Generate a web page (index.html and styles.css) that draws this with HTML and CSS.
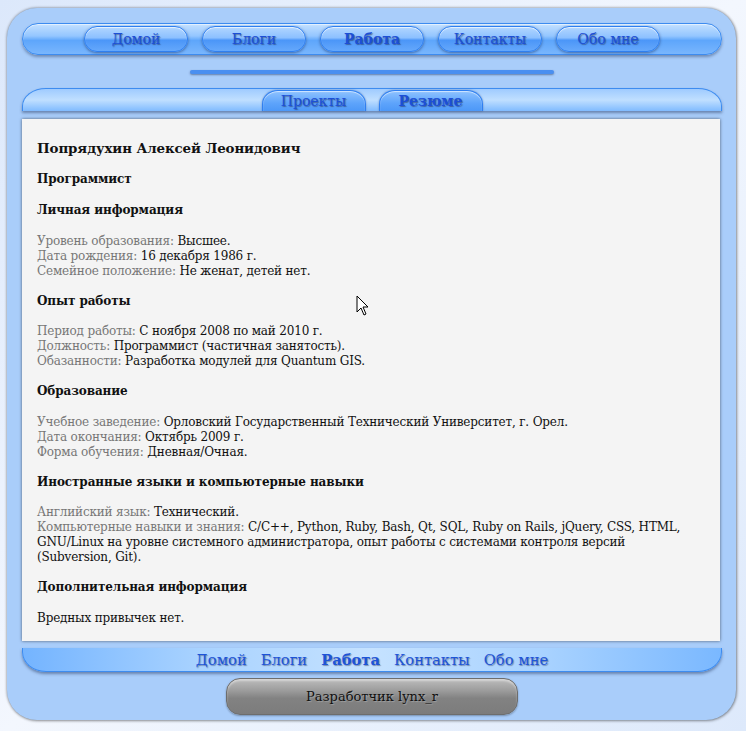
FILE: index.html
```html
<!DOCTYPE html>
<html lang="ru">
<head>
<meta charset="utf-8">
<title>Резюме</title>
<link rel="stylesheet" href="styles.css">
</head>
<body>
<div class="wrap">
  <nav class="topbar">
    <a class="btn">Домой</a>
    <a class="btn">Блоги</a>
    <a class="btn active">Работа</a>
    <a class="btn">Контакты</a>
    <a class="btn">Обо мне</a>
  </nav>
  <div class="sep"></div>
  <nav class="subbar">
    <a class="tab">Проекты</a>
    <a class="tab active">Резюме</a>
  </nav>
  <main class="content">
    <h1 class="name">Попрядухин Алексей Леонидович</h1>
    <h3 class="sec">Программист</h3>
    <h3 class="sec">Личная информация</h3>
    <p class="info"><span class="lbl">Уровень образования:</span> Высшее.<br><span class="lbl">Дата рождения:</span> 16 декабря 1986 г.<br><span class="lbl">Семейное положение:</span> Не женат, детей нет.</p>
    <h3 class="sec">Опыт работы</h3>
    <p class="info"><span class="lbl">Период работы:</span> С ноября 2008 по май 2010 г.<br><span class="lbl">Должность:</span> Программист (частичная занятость).<br><span class="lbl">Обазанности:</span> Разработка модулей для Quantum GIS.</p>
    <h3 class="sec">Образование</h3>
    <p class="info"><span class="lbl">Учебное заведение:</span> Орловский Государственный Технический Университет, г. Орел.<br><span class="lbl">Дата окончания:</span> Октябрь 2009 г.<br><span class="lbl">Форма обучения:</span> Дневная/Очная.</p>
    <h3 class="sec">Иностранные языки и компьютерные навыки</h3>
    <p class="info"><span class="lbl">Английский язык:</span> Технический.<br><span class="lbl">Компьютерные навыки и знания:</span> C/C++, Python, Ruby, Bash, Qt, SQL, Ruby on Rails, jQuery, CSS, HTML, GNU/Linux на уровне системного администратора, опыт работы с системами контроля версий (Subversion, Git).</p>
    <h3 class="sec">Дополнительная информация</h3>
    <p class="info">Вредных привычек нет.</p>
    <svg class="cursor" width="14" height="22" viewBox="0 0 14 22"><path d="M1 1 L1 17 L5 13 L8 20 L10 19 L7 12 L12 12 Z" fill="#fff" stroke="#000" stroke-width="1"/></svg>
  </main>
  <nav class="footbar">
    <a class="flink">Домой</a>
    <a class="flink">Блоги</a>
    <a class="flink active">Работа</a>
    <a class="flink">Контакты</a>
    <a class="flink">Обо мне</a>
  </nav>
  <div class="credit">Разработчик lynx_r</div>
</div>
</body>
</html>
```
FILE: styles.css
```css
html, body {
  margin: 0;
  padding: 0;
}
body {
  background: linear-gradient(135deg, #dce8fb 0%, #f3f7fe 50%, #dde9fb 100%);
  font-family: "DejaVu Serif", "Liberation Serif", serif;
  min-height: 731px;
  overflow: hidden;
}
.wrap {
  position: relative;
  margin: 8px 10px 0 7px;
  height: 712px;
  box-sizing: border-box;
  padding: 15px 14px 0 15px;
  background: #a9cdfa;
  border-radius: 30px;
  box-shadow: 0 0 3px rgba(0,0,0,0.45), 1px 1px 3px rgba(0,0,0,0.25);
  display: flex;
  flex-direction: column;
  align-items: stretch;
}
.topbar {
  height: 32px;
  box-sizing: border-box;
  border: 1px solid #3d8cf0;
  border-radius: 16px;
  background: linear-gradient(#c3e0ff 0%, #94c6ff 40%, #5ea6fb 55%, #79b6fd 100%);
  box-shadow: 0 2px 3px rgba(40,60,100,0.45), inset 0 1px 1px rgba(255,255,255,0.6);
  display: flex;
  justify-content: center;
  align-items: center;
  gap: 14px;
}
.btn {
  width: 104px;
  height: 26px;
  box-sizing: border-box;
  border: 1px solid #2f7ff0;
  border-radius: 13px;
  background: linear-gradient(#b2d6ff 0%, #8cc0ff 45%, #4b96f8 55%, #65a8fb 100%);
  box-shadow: 0 1px 3px rgba(20,40,90,0.55), inset 0 1px 1px rgba(255,255,255,0.7);
  display: flex;
  align-items: center;
  justify-content: center;
  font-family: "DejaVu Serif", serif;
  font-size: 14px;
  color: #1c4fd6;
  text-shadow: 1px 1px 1px rgba(30,40,80,0.5);
  cursor: pointer;
}
.btn.active {
  font-weight: bold;
}
.sep {
  align-self: center;
  width: 364px;
  height: 4px;
  margin: 15px 0 14px;
  border-radius: 2px;
  background: #4a8ff0;
  box-shadow: 0 1px 2px rgba(30,50,90,0.5);
}
.subbar {
  height: 23px;
  box-sizing: border-box;
  border: 1px solid #3d8cf0;
  border-bottom: 0;
  border-radius: 24px 24px 0 0 / 18px 18px 0 0;
  background: linear-gradient(#9fcbff 0%, #c0dfff 50%, #80bbff 100%);
  box-shadow: 0 2px 3px rgba(40,60,100,0.5);
  display: flex;
  justify-content: center;
  align-items: flex-end;
  gap: 13px;
}
.tab {
  width: 104px;
  height: 21px;
  box-sizing: border-box;
  border: 1px solid #2f7ff0;
  border-bottom: 0;
  border-radius: 16px 16px 0 0 / 14px 14px 0 0;
  background: linear-gradient(#8ec2ff 0%, #5ea4fb 60%, #4c98f8 100%);
  box-shadow: 0 0 2px rgba(20,40,90,0.45), inset 0 1px 1px rgba(255,255,255,0.6);
  display: flex;
  align-items: center;
  justify-content: center;
  font-size: 14px;
  color: #1c4fd6;
  text-shadow: 1px 1px 1px rgba(30,40,80,0.5);
}
.tab.active {
  font-weight: bold;
}
.content {
  position: relative;
  margin-top: 8px;
  margin-right: 2px;
  height: 522px;
  box-sizing: border-box;
  padding: 20px 26px 0 15px;
  background: #f4f4f4;
  box-shadow: 0 0 3px rgba(0,0,0,0.55);
  font-family: "DejaVu Serif", serif;
  font-size: 12px;
  line-height: 15px;
  letter-spacing: -0.18px;
  color: #111;
}
.name {
  margin: 0;
  font-size: 13.4px;
  line-height: 18px;
  font-weight: bold;
  letter-spacing: -0.1px;
}
.sec {
  margin: 13px 0 0;
  font-size: 12px;
  line-height: 18px;
  font-weight: bold;
  letter-spacing: -0.1px;
}
.info {
  margin: 14.6px 0 0;
}
.lbl {
  color: #777;
}
.cursor {
  position: absolute;
  left: 334px;
  top: 176px;
}
.footbar {
  margin-top: 7px;
  height: 24px;
  box-sizing: border-box;
  border: 1px solid #3d8cf0;
  border-top: 0;
  border-radius: 0 0 24px 24px / 0 0 20px 20px;
  background: linear-gradient(90deg, #74b4ff 0%, #a8d2ff 25%, #c5e2ff 50%, #a8d2ff 75%, #7ab8ff 100%);
  box-shadow: 0 2px 3px rgba(40,60,100,0.5);
  display: flex;
  justify-content: center;
  align-items: center;
  gap: 14px;
}
.flink {
  font-size: 14.7px;
  color: #1d54d8;
  text-shadow: 1px 1px 1px rgba(30,40,80,0.45);
}
.flink.active {
  font-weight: bold;
}
.credit {
  align-self: center;
  margin-top: 6px;
  width: 292px;
  height: 37px;
  box-sizing: border-box;
  border: 1px solid #6d6d6d;
  border-radius: 14px;
  background: linear-gradient(#bdbdbd 0%, #9a9a9a 35%, #828282 55%, #7c7c7c 100%);
  box-shadow: inset 0 2px 2px rgba(255,255,255,0.4), 0 1px 2px rgba(0,0,0,0.3);
  display: flex;
  align-items: center;
  justify-content: center;
  font-family: "DejaVu Serif", serif;
  font-size: 13px;
  color: #111;
  text-shadow: 1px 1px 1px rgba(255,255,255,0.25);
}
```
